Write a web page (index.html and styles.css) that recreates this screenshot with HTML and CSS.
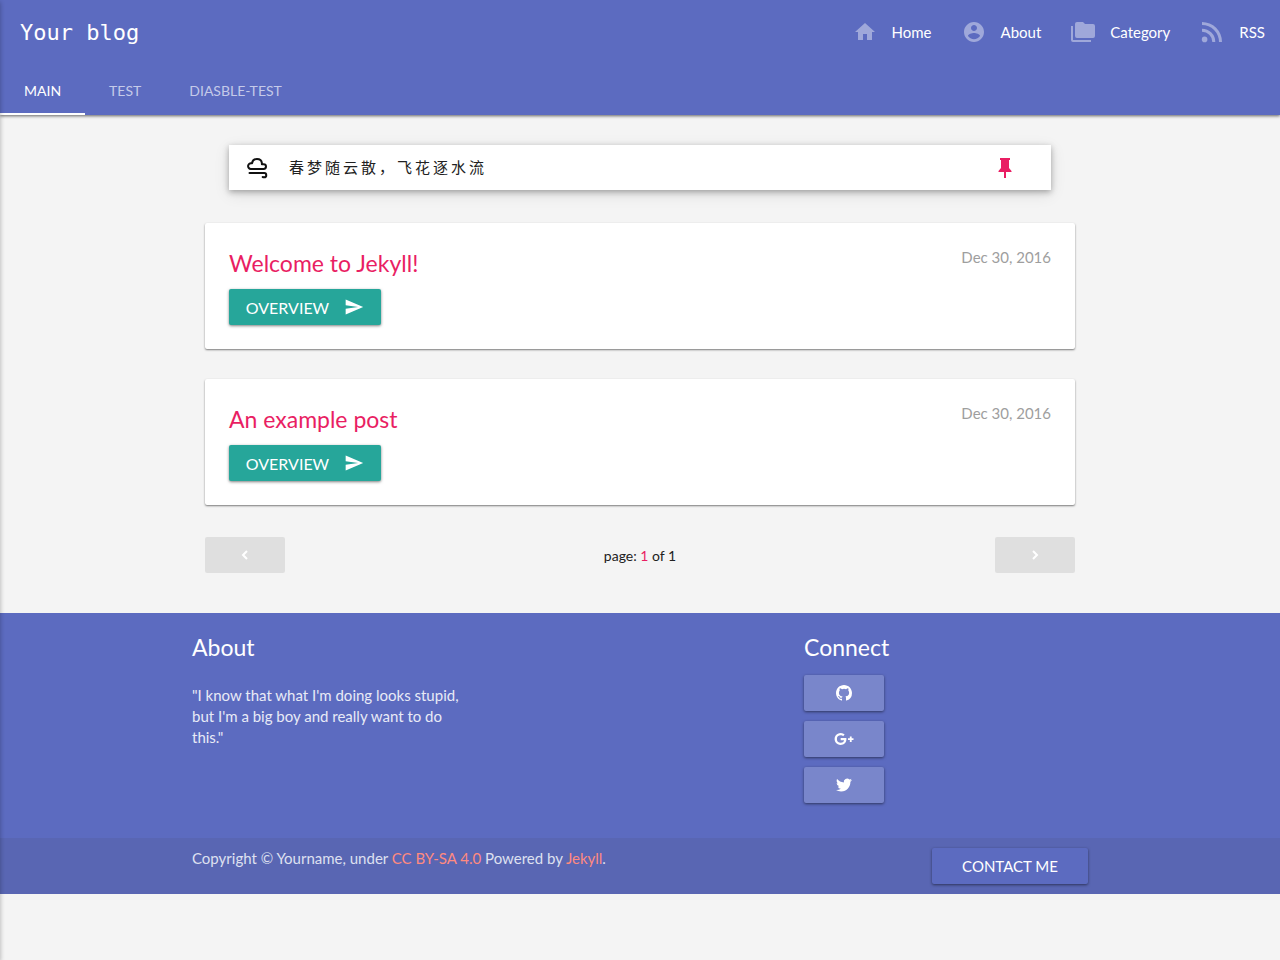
FILE: index.html
```html
<!DOCTYPE html>
<html lang="en">
<head>
<meta charset="utf-8">
<meta name="viewport" content="width=device-width, initial-scale=1">
<title>Your blog</title>
<link rel="stylesheet" href="styles.css">
</head>
<body>
<div class="drawer-edge" aria-hidden="true"></div>
<header class="header">
  <div class="topbar">
    <a class="brand" href="#">Your blog</a>
    <nav class="menu" aria-label="Main">
      <a class="menu-link" href="#"><svg class="icon" viewBox="0 0 24 24"><path d="M10 20v-6h4v6h5v-8h3L12 3 2 12h3v8z"/></svg><span>Home</span></a>
      <a class="menu-link" href="#"><svg class="icon" viewBox="0 0 24 24"><path d="M12 2C6.48 2 2 6.48 2 12s4.480 10 10 10 10-4.480 10-10S17.520 2 12 2zm0 3c1.660 0 3 1.340 3 3s-1.340 3-3 3-3-1.340-3-3 1.340-3 3-3zm0 14.200c-2.500 0-4.710-1.280-6-3.220.03-1.990 4-3.080 6-3.080 1.990 0 5.970 1.090 6 3.080-1.290 1.940-3.500 3.220-6 3.220z"/></svg><span>About</span></a>
      <a class="menu-link" href="#"><svg class="icon" viewBox="0 0 24 24"><path d="M2 6H0v14a2 2 0 0 0 2 2h18v-2H2V6zm20-2h-8l-2-2H6a2 2 0 0 0-1.990 2L4 16a2 2 0 0 0 2 2h16a2 2 0 0 0 2-2V6a2 2 0 0 0-2-2z"/></svg><span>Category</span></a>
      <a class="menu-link" href="#"><svg class="icon" viewBox="0 0 24 24"><circle cx="4.600" cy="19.400" r="2.800"/><path d="M2 8.700v3A10.300 10.300 0 0 1 12.300 22h3A13.300 13.300 0 0 0 2 8.700zM2 2v3a17 17 0 0 1 17 17h3A20 20 0 0 0 2 2z"/></svg><span>RSS</span></a>
    </nav>
  </div>
  <nav class="tabs" aria-label="Sections">
    <a class="tab tab-active" href="#">MAIN</a>
    <a class="tab" href="#">TEST</a>
    <a class="tab" href="#">DIASBLE-TEST</a>
  </nav>
</header>
<main class="container">
  <section class="notice">
    <svg class="notice-icon" viewBox="0 0 22 22"><path d="M4.800 12a2.900 2.900 0 0 1 .4-5.800h.9C6.400 3.500 8.500 2 11 2s4.600 1.500 4.900 4.200v1h1.700a2.400 2.400 0 0 1 0 4.800z"/><path d="M3.500 16h14.800c2.600 0 2.600 4.300 0 4.300-.6 0-1.200-.1-1.600-.3"/></svg>
    <p class="notice-text" lang="zh">春梦随云散，飞花逐水流</p>
    <svg class="pin-icon" viewBox="0 0 14 22"><path d="M2 1h10v2h-1v8l2.500 3v1H8v6H6v-6H.5v-1L3 11V3H2z"/></svg>
  </section>
  <article class="card">
    <div>
      <h2 class="card-title"><a href="#">Welcome to Jekyll!</a></h2>
      <a class="button overview" href="#">OVERVIEW<svg class="send" viewBox="0 0 24 24"><path d="M2 21l21-9L2 3v7l15 2-15 2z"/></svg></a>
    </div>
    <time class="date" datetime="2016-12-30">Dec 30, 2016</time>
  </article>
  <article class="card">
    <div>
      <h2 class="card-title"><a href="#">An example post</a></h2>
      <a class="button overview" href="#">OVERVIEW<svg class="send" viewBox="0 0 24 24"><path d="M2 21l21-9L2 3v7l15 2-15 2z"/></svg></a>
    </div>
    <time class="date" datetime="2016-12-30">Dec 30, 2016</time>
  </article>
  <nav class="pager" aria-label="Pages">
    <button class="button step" type="button" disabled aria-label="Previous page"><svg class="chevron" viewBox="0 0 16 16"><path d="M10 4L6 8l4 4"/></svg></button>
    <span>page: <span class="current">1</span> of 1</span>
    <button class="button step" type="button" disabled aria-label="Next page"><svg class="chevron" viewBox="0 0 16 16"><path d="M6 4l4 4-4 4"/></svg></button>
  </nav>
</main>
<footer class="footer">
  <div class="footer-main">
    <section>
      <h2 class="footer-title">About</h2>
      <p class="quote">"I know that what I'm doing looks stupid, but I'm a big boy and really want to do this."</p>
    </section>
    <section class="connect">
      <h2 class="footer-title">Connect</h2>
      <div class="social">
        <a class="button social-link" href="#" aria-label="GitHub"><svg class="social-icon" viewBox="0 0 16 16"><path d="M8 0C3.580 0 0 3.580 0 8c0 3.540 2.290 6.530 5.470 7.590.4.070.55-.17.55-.38 0-.19-.01-.82-.01-1.490-2.010.37-2.530-.49-2.690-.94-.09-.23-.48-.94-.82-1.130-.28-.15-.68-.52-.01-.53.63-.01 1.080.58 1.230.82.72 1.210 1.870.87 2.330.66.070-.52.28-.87.51-1.070-1.780-.2-3.640-.89-3.640-3.950 0-.87.31-1.590.82-2.150-.08-.2-.36-1.020.08-2.120 0 0 .67-.21 2.200.82a7.600 7.600 0 0 1 4 0c1.530-1.040 2.200-.82 2.200-.82.44 1.100.16 1.920.08 2.120.51.56.82 1.270.82 2.150 0 3.070-1.870 3.750-3.650 3.950.29.25.54.73.54 1.480 0 1.070-.01 1.930-.01 2.200 0 .21.15.46.55.38A8.010 8.010 0 0 0 16 8c0-4.420-3.580-8-8-8z"/></svg></a>
        <a class="button social-link" href="#" aria-label="Google Plus"><svg class="social-icon wide" viewBox="0 0 24 24"><path d="M8 10.900v2.500h4.100c-.2 1.100-1.300 3.100-4.100 3.100a4.500 4.500 0 0 1 0-9c1.400 0 2.300.6 2.900 1.100l1.900-1.900A7.200 7.200 0 1 0 8 19.200c4.100 0 6.900-2.900 6.900-7.100 0-.5-.1-.8-.1-1.200H8zm11-2v2.200h-2.200v2.200H19v2.200h2.200v-2.200h2.200v-2.200h-2.200V8.900z"/></svg></a>
        <a class="button social-link" href="#" aria-label="Twitter"><svg class="social-icon" viewBox="0 0 24 24"><path d="M23.950 4.570a10 10 0 0 1-2.820.77 4.960 4.960 0 0 0 2.160-2.720c-.95.55-2 .95-3.130 1.180a4.920 4.920 0 0 0-8.380 4.480C7.690 8.090 4.070 6.130 1.640 3.160a4.820 4.820 0 0 0-.67 2.480c0 1.710.87 3.210 2.190 4.100a4.900 4.900 0 0 1-2.230-.62v.06a4.920 4.920 0 0 0 3.950 4.830 5 5 0 0 1-2.210.08 4.940 4.940 0 0 0 4.600 3.420A9.870 9.870 0 0 1 0 19.540a14 14 0 0 0 7.560 2.210c9.050 0 14-7.500 14-13.980 0-.21 0-.42-.02-.63a9.940 9.940 0 0 0 2.410-2.570z"/></svg></a>
      </div>
    </section>
  </div>
  <div class="copyright">
    <div class="copyright-inner">
      <p class="copyright-text">Copyright © Yourname, under <a href="#">CC BY-SA 4.0</a> Powered by <a href="#">Jekyll</a>.</p>
      <a class="button contact" href="#">CONTACT ME</a>
    </div>
  </div>
</footer>
</body>
</html>
```

FILE: styles.css
```css
* {
  box-sizing: border-box;
}

body {
  margin: 0;
  background: #f4f4f4;
  color: #212121;
  font-family: Lato, "Noto Sans CJK SC", sans-serif;
  font-size: 15px;
  line-height: 21px;
}

a {
  color: inherit;
  text-decoration: none;
}

h2,
p {
  margin: 0;
  font-weight: 400;
}

svg {
  fill: currentColor;
  flex: none;
}

/* shadow of the closed side drawer */
.drawer-edge {
  position: fixed;
  top: 0;
  bottom: 0;
  left: -10px;
  width: 10px;
  z-index: 5;
  box-shadow: 0 2px 5px rgba(0, 0, 0, 0.3);
}

.header {
  background: #5c6bc0;
  color: #fff;
  box-shadow: 0 1px 3px rgba(0, 0, 0, 0.6);
}

.topbar {
  display: flex;
  align-items: center;
  justify-content: space-between;
  height: 64px;
  padding-left: 20px;
}

.brand {
  font-family: "DejaVu Sans Mono", monospace;
  font-size: 22px;
}

.menu {
  display: flex;
}

.menu-link {
  display: flex;
  align-items: center;
  gap: 15px;
  padding: 0 15px;
}

.icon {
  width: 24px;
  height: 24px;
  color: #9fa8da;
}

.tabs {
  display: flex;
  padding-top: 3px;
  font-size: 14px;
}

.tab {
  height: 48px;
  padding: 0 24px;
  line-height: 48px;
  color: #c5cae9;
}

.tab-active {
  color: #fff;
  border-bottom: 2px solid #fff;
}

.container {
  width: 70%;
  margin: 0 auto;
  padding: 30px 13px 40px;
}

.notice {
  display: flex;
  align-items: center;
  margin: 0 24px 33px;
  padding: 0 39px 0 17px;
  height: 45px;
  background: #fff;
  box-shadow: 0 2px 6px rgba(0, 0, 0, 0.3), 0 4px 16px rgba(0, 0, 0, 0.1);
}

.notice-icon {
  width: 22px;
  height: 22px;
  fill: none;
  stroke: #111;
  stroke-width: 2;
  stroke-linecap: round;
  stroke-linejoin: round;
}

.notice-text {
  flex: 1;
  padding-left: 21px;
  letter-spacing: 3px;
}

.pin-icon {
  width: 14px;
  height: 22px;
  color: #e91e63;
}

.card {
  display: flex;
  justify-content: space-between;
  margin-bottom: 30px;
  padding: 24px;
  background: #fff;
  border-radius: 2px;
  box-shadow: 0 1px 2px rgba(0, 0, 0, 0.5);
}

.card-title {
  margin-bottom: 10px;
  color: #e91e63;
  font-size: 23px;
  line-height: 32px;
}

.date {
  color: #9e9e9e;
}

.button {
  display: flex;
  align-items: center;
  justify-content: center;
  height: 36px;
  border: 0;
  border-radius: 2px;
  color: #fff;
  box-shadow: 0 1px 3px rgba(0, 0, 0, 0.5);
}

.overview {
  width: 152px;
  gap: 15px;
  background: #26a69a;
  font-size: 16px;
}

.send {
  width: 20px;
  height: 20px;
}

.pager {
  display: flex;
  align-items: center;
  justify-content: space-between;
  padding-top: 2px;
  font-size: 14px;
}

.step {
  width: 80px;
  background: #dfdfdf;
  box-shadow: none;
}

.chevron {
  width: 16px;
  height: 16px;
  fill: none;
  stroke: #fff;
  stroke-width: 2;
}

.current {
  color: #e91e63;
}

.footer {
  background: #5c6bc0;
  color: #fff;
}

.footer-main {
  display: grid;
  grid-template-columns: 31% 1fr 284px;
  width: 70%;
  margin: 0 auto;
  padding: 20px 0 35px;
}

.connect {
  grid-column: 3;
}

.footer-title {
  margin-bottom: 14px;
  font-size: 23px;
  line-height: 28px;
}

.quote {
  padding-top: 10px;
  color: #e8eaf6;
}

.social {
  display: grid;
  gap: 10px;
}

.social-link {
  width: 80px;
  background: #7986cb;
}

.social-icon {
  width: 16px;
  height: 16px;
}

.wide {
  width: 20px;
  height: 20px;
}

.copyright {
  background: #5966b3;
}

.copyright-inner {
  display: flex;
  justify-content: space-between;
  width: 70%;
  margin: 0 auto;
  padding: 10px 0;
}

.copyright-text {
  color: #dee0f0;
}

.copyright-text a {
  color: #ff8a80;
}

.contact {
  width: 156px;
  background: #5c6bc0;
}
```
